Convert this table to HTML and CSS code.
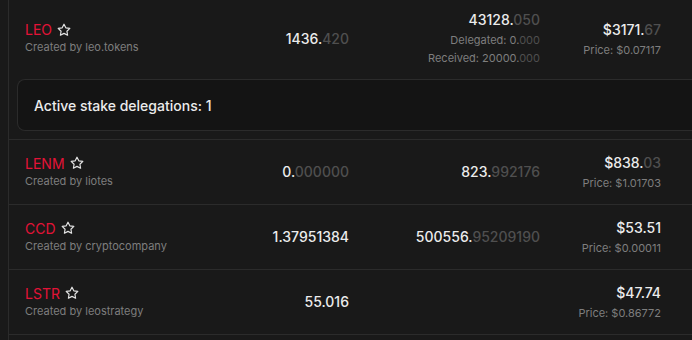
FILE: index.html
```html
<!DOCTYPE html>
<html>
<head>
<meta charset="utf-8">
<link rel="stylesheet" href="styles.css">
</head>
<body>
<div class="table">
  <div class="row row-first">
    <div class="c-name">
      <div class="sym">LEO <svg class="star" viewBox="0 0 24 24"><path d="M12 2l3.09 6.26L22 9.27l-5 4.87 1.18 6.88L12 17.77l-6.18 3.25L7 14.140 2 9.27l6.91-1.01L12 2z"/></svg></div>
      <div class="by">Created by leo.tokens</div>
    </div>
    <div class="c-num"><span class="w">1436.</span><span class="d">420</span></div>
    <div class="c-stake">
      <div class="main"><span class="w">43128.</span><span class="d">050</span></div>
      <div class="sub first">Delegated: 0.<span class="d">000</span></div>
      <div class="sub">Received: 20000.<span class="d">000</span></div>
    </div>
    <div class="c-val">
      <div class="main"><span class="w">$3171.</span><span class="d">67</span></div>
      <div class="price">Price: $0.07117</div>
    </div>
  </div>
  <div class="deleg">
    <div class="card">Active stake delegations: 1</div>
  </div>
  <div class="row">
    <div class="c-name">
      <div class="sym">LENM <svg class="star" viewBox="0 0 24 24"><path d="M12 2l3.09 6.26L22 9.27l-5 4.87 1.18 6.88L12 17.77l-6.18 3.25L7 14.14 2 9.27l6.91-1.01L12 2z"/></svg></div>
      <div class="by">Created by liotes</div>
    </div>
    <div class="c-num"><span class="w">0.</span><span class="d">000000</span></div>
    <div class="c-stake">
      <div class="main"><span class="w">823.</span><span class="d">992176</span></div>
    </div>
    <div class="c-val">
      <div class="main"><span class="w">$838.</span><span class="d">03</span></div>
      <div class="price">Price: $1.01703</div>
    </div>
  </div>
  <div class="row">
    <div class="c-name">
      <div class="sym">CCD <svg class="star" viewBox="0 0 24 24"><path d="M12 2l3.09 6.26L22 9.27l-5 4.87 1.18 6.88L12 17.77l-6.18 3.25L7 14.14 2 9.27l6.91-1.01L12 2z"/></svg></div>
      <div class="by">Created by cryptocompany</div>
    </div>
    <div class="c-num"><span class="w">1.37951384</span></div>
    <div class="c-stake">
      <div class="main"><span class="w">500556.</span><span class="d">95209190</span></div>
    </div>
    <div class="c-val">
      <div class="main"><span class="w">$53.51</span></div>
      <div class="price">Price: $0.00011</div>
    </div>
  </div>
  <div class="row">
    <div class="c-name">
      <div class="sym">LSTR <svg class="star" viewBox="0 0 24 24"><path d="M12 2l3.09 6.26L22 9.27l-5 4.87 1.18 6.88L12 17.77l-6.18 3.25L7 14.14 2 9.27l6.91-1.01L12 2z"/></svg></div>
      <div class="by">Created by leostrategy</div>
    </div>
    <div class="c-num"><span class="w">55.016</span></div>
    <div class="c-stake"></div>
    <div class="c-val">
      <div class="main"><span class="w">$47.74</span></div>
      <div class="price">Price: $0.86772</div>
    </div>
  </div>
  <div class="row row-tail"></div>
</div>
</body>
</html>
```

FILE: styles.css
```css
html, body {
  margin: 0;
  padding: 0;
  background: #191919;
  font-family: Inter, "Noto Sans", sans-serif;
  color: #ececec;
  overflow: hidden;
}
.table {
  margin-left: 8px;
  border-left: 1px solid #2b2b2b;
  width: 683px;
}
.row {
  display: grid;
  grid-template-columns: 224px 100px 191px 121px 31px;
  align-items: center;
  height: 64px;
  border-bottom: 1px solid #2b2b2b;
  padding-left: 16px;
  box-sizing: content-box;
}
.row-first {
  height: 57px;
  padding-top: 10px;
  padding-bottom: 4px;
  border-bottom: none;
}
.row-tail { border-bottom: none; }
.c-name { display: flex; flex-direction: column; margin-top: -3px; }
.sym {
  color: #e31337;
  font-size: 14px;
  line-height: 20px;
  display: flex;
  align-items: center;
  gap: 5px;
}
.star {
  width: 14px;
  height: 14px;
  fill: none;
  stroke: #e6e6e6;
  stroke-width: 2;
  stroke-linejoin: round;
  margin-top: -1px;
}
.by {
  color: #7e7e7e;
  font-size: 11px;
  line-height: 14px;
}
.c-num, .c-stake, .c-val { text-align: right; }
.c-num, .main {
  font-size: 14px;
  font-weight: 500;
  line-height: 20px;
}
.w { color: #ececec; }
.d { color: #4f4f4f; }
.sub {
  font-size: 11px;
  line-height: 18px;
  color: #7e7e7e;
}
.sub.first { margin-top: 1px; }
.price {
  font-size: 11px;
  line-height: 20px;
  color: #7e7e7e;
}
.c-val { padding-top: 2px; }
.deleg {
  padding: 8px 0 8px 8px;
  border-bottom: 1px solid #2b2b2b;
}
.card {
  background: #141414;
  border: 1px solid #2b2b2b;
  border-right: none;
  border-radius: 8px 0 0 8px;
  height: 50px;
  display: flex;
  align-items: center;
  padding-left: 16px;
  font-size: 14px;
  font-weight: 500;
  color: #ececec;
}
```
